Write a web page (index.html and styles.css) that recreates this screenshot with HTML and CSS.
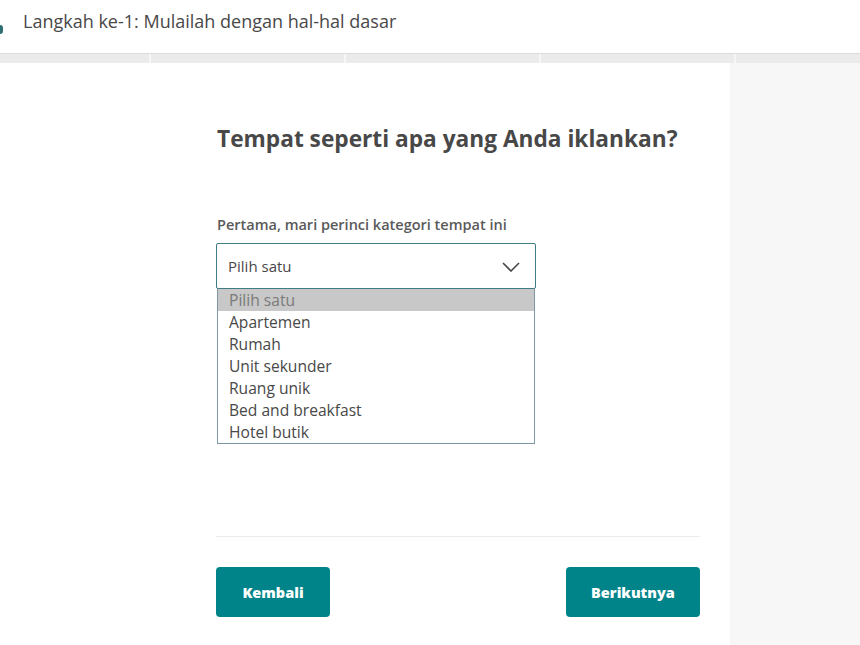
FILE: index.html
```html
<!DOCTYPE html>
<html lang="id">
<head>
<meta charset="utf-8">
<title>Langkah ke-1</title>
<link rel="stylesheet" href="styles.css">
</head>
<body>
<header class="topbar">
  <span class="logo-edge"></span>
  <h2 class="step-title">Langkah ke-1: Mulailah dengan hal-hal dasar</h2>
</header>
<div class="progress">
  <span class="seg seg-first"></span>
  <span class="seg"></span>
  <span class="seg"></span>
  <span class="seg"></span>
  <span class="seg seg-last"></span>
</div>
<main class="layout">
  <section class="form-area">
    <div class="form-col">
      <h1 class="question">Tempat seperti apa yang Anda iklankan?</h1>
      <label class="field-label">Pertama, mari perinci kategori tempat ini</label>
      <div class="select-wrap">
        <div class="select-box">
          <span>Pilih satu</span>
          <svg class="chev" width="18" height="10" viewBox="0 0 18 10"><path d="M1 1 L9 9 L17 1" fill="none" stroke="#484848" stroke-width="1.6"/></svg>
        </div>
        <ul class="dropdown">
          <li class="opt opt-selected">Pilih satu</li>
          <li class="opt">Apartemen</li>
          <li class="opt">Rumah</li>
          <li class="opt">Unit sekunder</li>
          <li class="opt">Ruang unik</li>
          <li class="opt">Bed and breakfast</li>
          <li class="opt">Hotel butik</li>
        </ul>
      </div>
      <div class="spacer"></div>
      <hr class="divider">
      <div class="actions">
        <button class="btn btn-back">Kembali</button>
        <button class="btn btn-next">Berikutnya</button>
      </div>
    </div>
  </section>
  <aside class="side-panel"></aside>
</main>
</body>
</html>
```

FILE: styles.css
```css
* { box-sizing: border-box; }
html, body { margin: 0; padding: 0; }
body {
  font-family: "Open Sans", "Noto Sans", sans-serif;
  color: #484848;
  background: #fff;
  width: 860px;
  height: 645px;
  overflow: hidden;
}
.topbar {
  height: 54px;
  border-bottom: 1px solid #dcdcdc;
  display: flex;
  align-items: center;
  padding-bottom: 12px;
}
.logo-edge {
  width: 3px;
  height: 9px;
  margin-top: 18px;
  border-radius: 0 5px 5px 0;
  background: #2f6f74;
}
.step-title {
  margin: 0 0 0 20px;
  font-size: 18px;
  font-weight: 400;
  color: #484848;
}
.progress {
  height: 9px;
  background: #ebebeb;
  display: flex;
}
.seg { width: 195px; height: 100%; border-right: 2px solid #f6f6f6; }
.seg-first { width: 151px; }
.seg-last { flex: 1; border-right: none; }
.layout {
  display: flex;
  height: 582px;
}
.form-area {
  width: 730px;
  padding-left: 216px;
  background: #fff;
}
.side-panel {
  flex: 1;
  background: #f7f7f7;
}
.form-col {
  width: 484px;
  display: flex;
  flex-direction: column;
  padding-top: 60px;
}
.question {
  margin: 0 0 0 1px;
  font-size: 22.7px;
  line-height: 32px;
  font-weight: 700;
  color: #484848;
}
.field-label {
  margin: 59px 0 0 1px;
  font-size: 14.5px;
  line-height: 22px;
  font-weight: 600;
  color: #5a5a5a;
}
.select-wrap {
  position: relative;
  margin-top: 7px;
  width: 320px;
}
.select-box {
  height: 46px;
  border: 1px solid #3f7d82;
  border-radius: 2px;
  display: flex;
  align-items: center;
  justify-content: space-between;
  padding: 0 15px 0 11px;
  font-size: 15px;
  color: #484848;
}
.chev { margin-top: 2px; }
.dropdown {
  position: absolute;
  top: 46px;
  left: 1px;
  width: 318px;
  margin: 0;
  padding: 0;
  list-style: none;
  background: #fff;
  border: 1px solid #7d98a8;
  border-top: none;
}
.opt {
  height: 22px;
  line-height: 22px;
  padding-left: 11px;
  font-size: 15.6px;
  color: #484848;
}
.opt-selected {
  background: #c8c8c8;
  color: #7a7a7a;
}
.spacer { height: 247px; }
.divider {
  margin: 0;
  border: none;
  border-top: 1px solid #ebebeb;
}
.actions {
  display: flex;
  justify-content: space-between;
  margin-top: 30px;
}
.btn {
  height: 50px;
  border: none;
  border-radius: 4px;
  background: #008489;
  color: #fff;
  font-family: "Open Sans", "Noto Sans", sans-serif;
  font-size: 14.5px;
  font-weight: 800;
  padding: 0;
}
.btn-back { width: 114px; }
.btn-next { width: 134px; }
```
